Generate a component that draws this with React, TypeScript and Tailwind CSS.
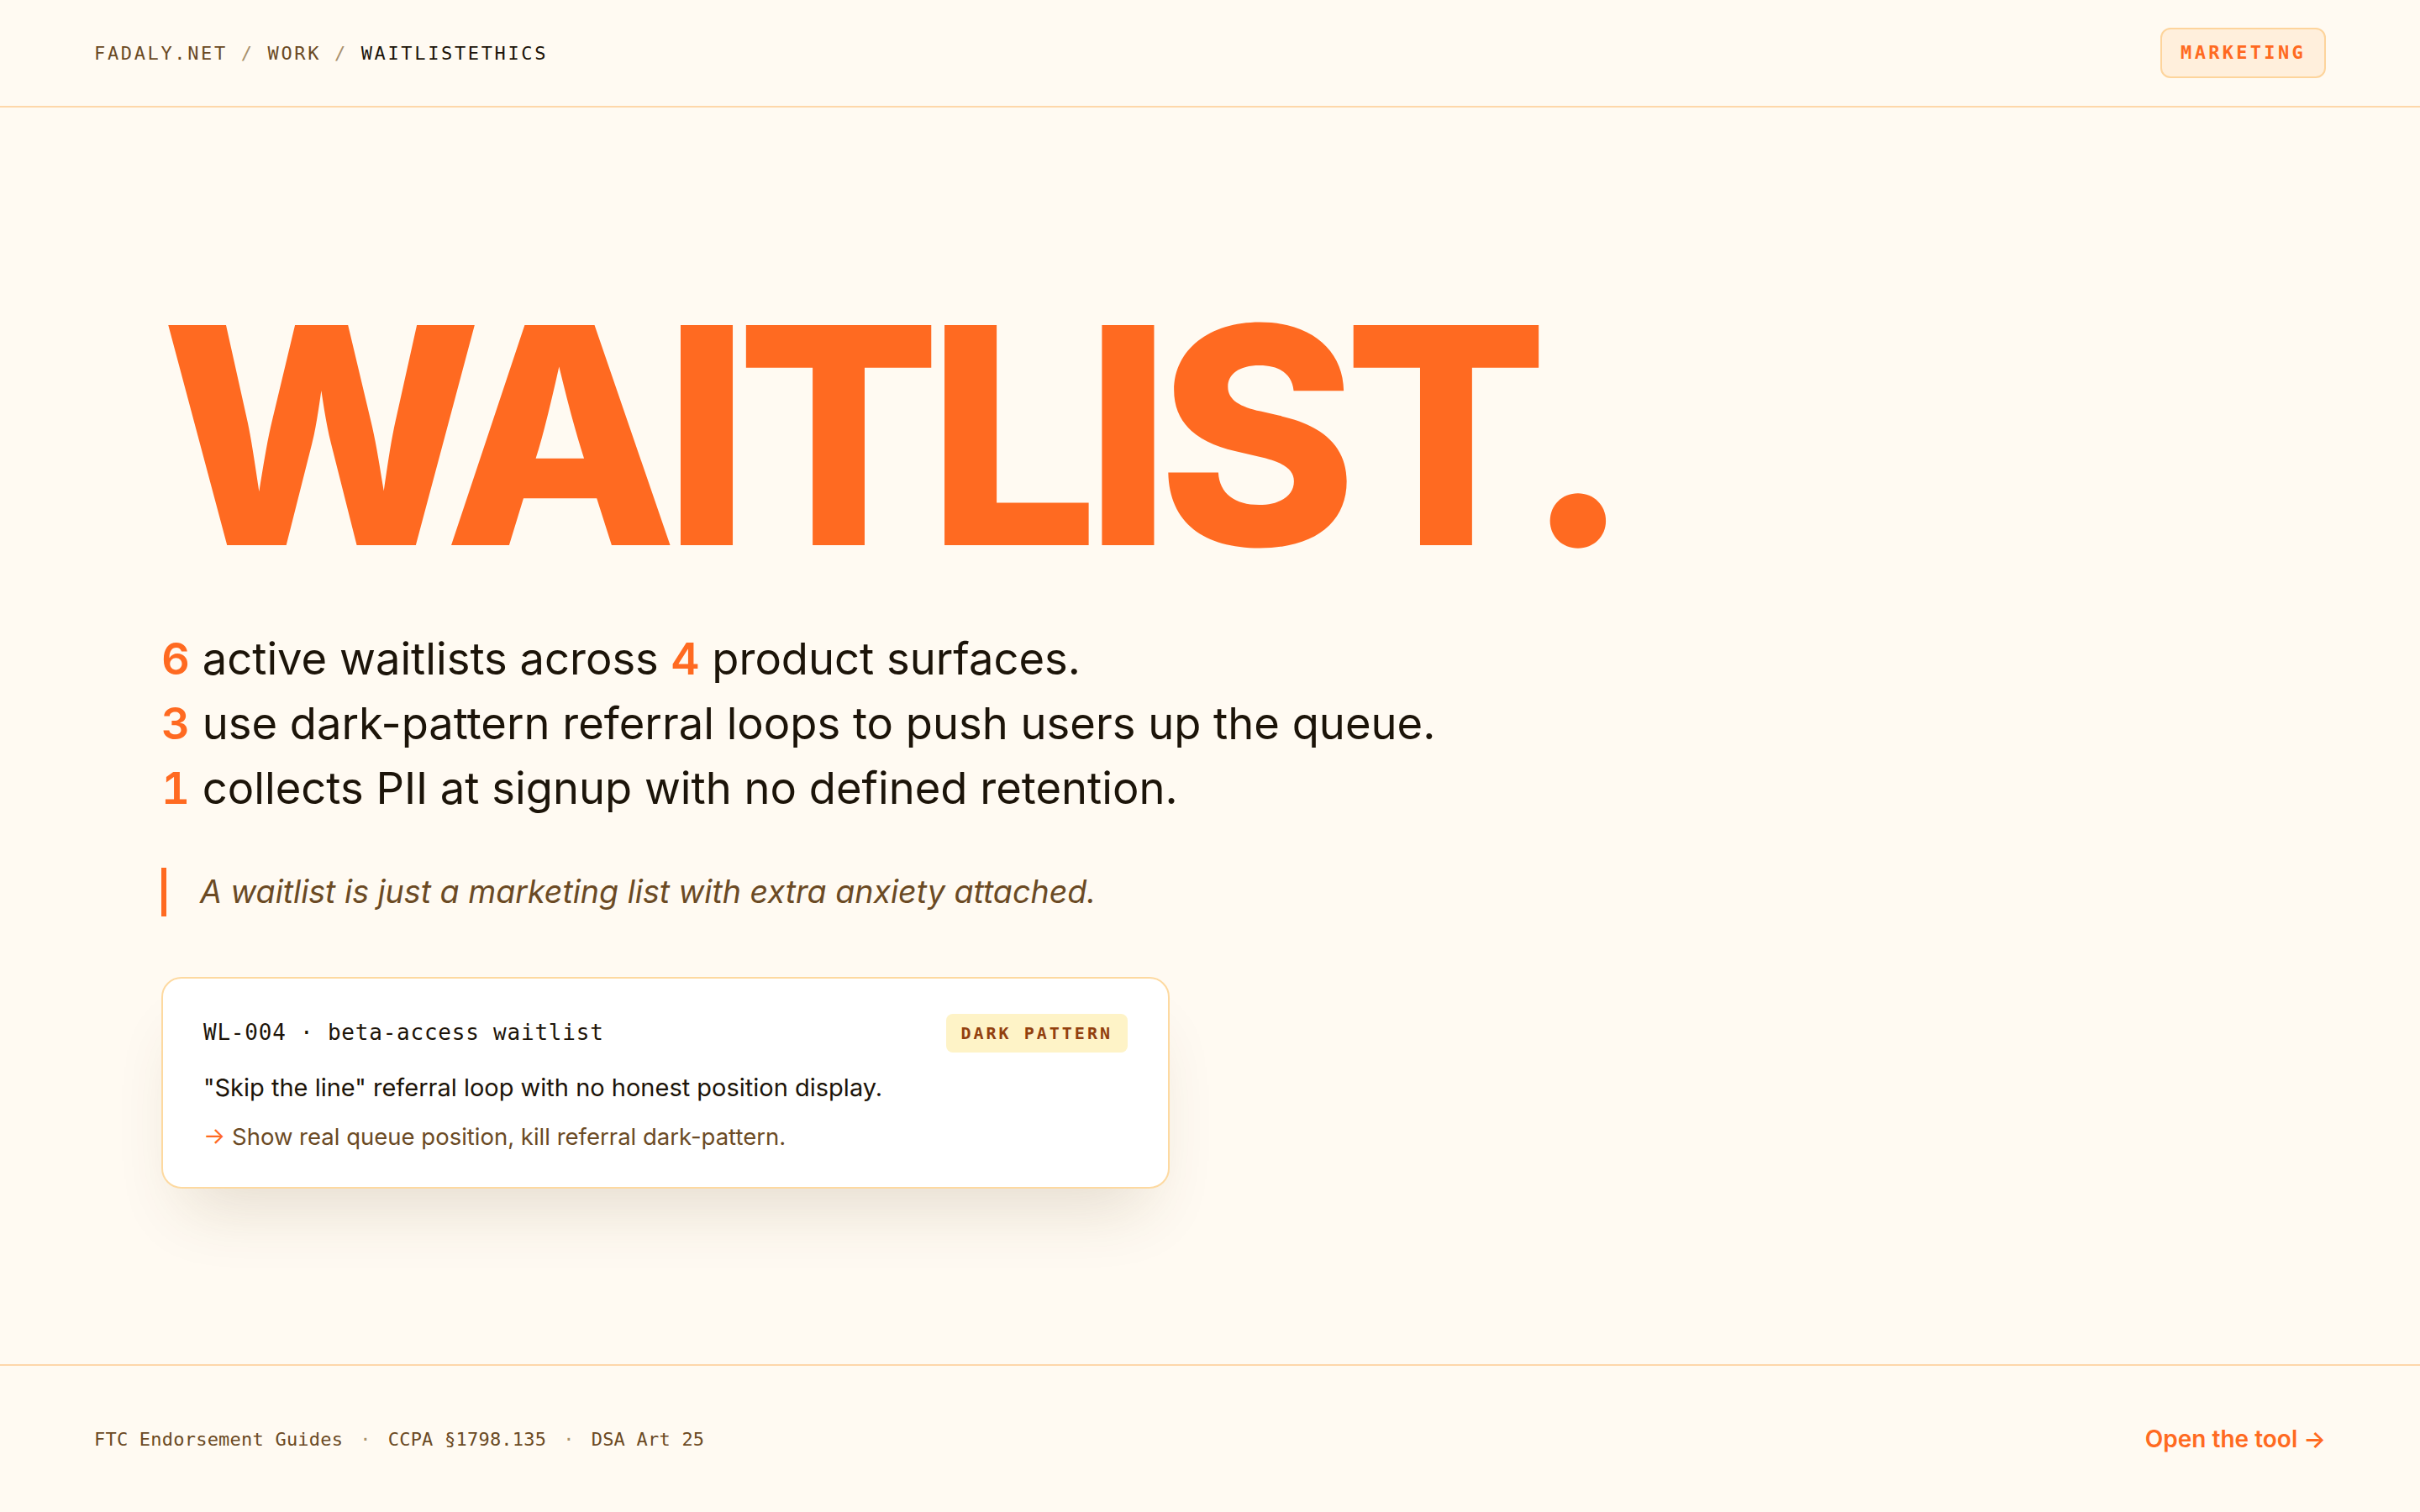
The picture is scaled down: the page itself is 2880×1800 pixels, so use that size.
import { ReactNode } from "react";

const sans = "font-['Inter','Noto_Sans',sans-serif]";
const mono = "font-['DejaVu_Sans_Mono','Liberation_Mono',monospace]";

function Num({ children }: { children: ReactNode }) {
  return <span className="font-semibold tabular-nums text-[#ff6a21]">{children}</span>;
}

export default function App() {
  return (
    <div className={cx("min-h-screen flex flex-col bg-[#fffaf2] text-[#1c1409]", sans)}>
      {/* Header */}
      <header className="h-32 flex items-center justify-between px-28 border-b-2 border-[#fed7aa]">
        <nav className={cx("text-[22px] tracking-[0.12em] uppercase", mono)}>
          <span className="text-[#6b4a24]">fadaly.net</span>
          <span className="text-[#a8906c]"> / </span>
          <span className="text-[#6b4a24]">work</span>
          <span className="text-[#a8906c]"> / </span>
          <span className="text-[#1c1409]">waitlistethics</span>
        </nav>
        <span
          className={cx(
            "px-[22px] py-3 leading-8 rounded-xl border-2 border-[#fdd49c] bg-[#ffefdc] text-[22px] font-bold tracking-[0.15em] text-[#ff6a21]",
            mono
          )}
        >
          MARKETING
        </span>
      </header>

      {/* Main */}
      <main className="flex-1 flex flex-col justify-center px-48">
        <h1 className="text-[360px] leading-none font-extrabold tracking-[-0.045em] text-[#ff6a21]">
          WAITLIST.
        </h1>

        <div className="mt-12 text-[52.5px] leading-[77px]">
          <p>
            <Num>6</Num> active waitlists across <Num>4</Num> product surfaces.
          </p>
          <p>
            <Num>3</Num> use dark-pattern referral loops to push users up the queue.
          </p>
          <p>
            <Num>1</Num> collects PII at signup with no defined retention.
          </p>
        </div>

        <blockquote className="mt-14 border-l-[6px] border-[#ff6a21] pl-10 text-[37.6px] leading-[58px] italic text-[#6b4a24]">
          A waitlist is just a marketing list with extra anxiety attached.
        </blockquote>

        <div className="mt-[72px] w-[1200px] rounded-3xl border-2 border-[#fdd9a0] bg-white px-12 pt-[42px] pb-10 shadow-[0_48px_80px_-28px_rgba(90,60,20,0.16)]">
          <div className="flex items-center justify-between">
            <span className={cx("text-[26px] font-medium tracking-[0.03em] text-[#1c1409]", mono)}>
              WL-004 · beta-access waitlist
            </span>
            <span
              className={cx(
                "rounded-lg px-[18px] py-2 leading-[30px] bg-[#fef3c7] text-[20px] font-bold tracking-[0.15em] text-[#92400e]",
                mono
              )}
            >
              DARK PATTERN
            </span>
          </div>
          <p className="mt-5 text-[29px] leading-[44px] text-[#1c1409]">
            "Skip the line" referral loop with no honest position display.
          </p>
          <p className="mt-4 text-[27.5px] leading-10 text-[#6b4a24]">
            <span className="text-[#ff6a21]">→</span> Show real queue position, kill referral dark-pattern.
          </p>
        </div>
      </main>

      {/* Footer */}
      <footer className="h-44 flex items-center justify-between px-28 border-t-2 border-[#fed7aa]">
        <div className={cx("flex items-center gap-5 text-[22px] tracking-[0.01em] text-[#6b4a24]", mono)}>
          <span>FTC Endorsement Guides</span>
          <span className="text-[#a8906c]">·</span>
          <span>CCPA §1798.135</span>
          <span className="text-[#a8906c]">·</span>
          <span>DSA Art 25</span>
        </div>
        <a className="text-[28px] font-semibold text-[#ff6a21]">Open the tool →</a>
      </footer>
    </div>
  );
}

function cx(...parts: string[]) {
  return parts.join(" ");
}
